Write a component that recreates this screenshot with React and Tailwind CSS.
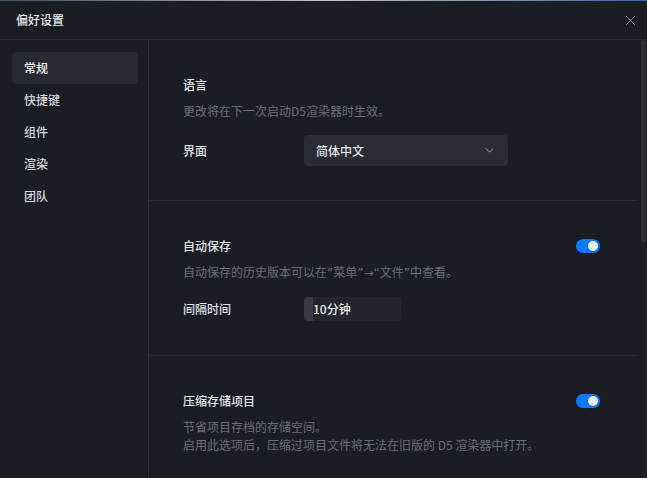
import React from "react";
import { ChevronDown, X } from "lucide-react";

const navItems = ["常规", "快捷键", "组件", "渲染", "团队"];

const Toggle = () => (
  <div className="w-6 h-[14px] rounded-full bg-[#0a7aff] flex items-center justify-end px-[2px]">
    <div className="w-[10px] h-[10px] rounded-full bg-[#e8efff]" />
  </div>
);

const Section = ({ title, toggle, children }) => (
  <div className="pl-[34px] pr-[37px] pt-9 pb-[34px] border-b border-[#2a2d35]">
    <div className="flex items-center justify-between h-[18px]">
      <span className="text-[12px] leading-[18px] font-medium text-[#e4e5e8]">{title}</span>
      {toggle && <Toggle />}
    </div>
    {children}
  </div>
);

// latin punctuation so the quotes stay narrow like the original
const Latin = ({ children }) => (
  <span className="leading-none" style={{ fontFamily: '"DejaVu Sans", sans-serif' }}>
    {children}
  </span>
);

export default function App() {
  return (
    <div
      className="w-[647px] h-[478px] bg-[#1b1d25] flex flex-col overflow-hidden"
      style={{ fontFamily: '"Noto Sans CJK SC", "Noto Sans", sans-serif' }}
    >
      <div className="h-px bg-gradient-to-r from-[#44506a] via-[#c9c2b4] to-[#3d66ad]" />
      <div className="h-[39px] flex items-center justify-between pl-4 pr-[8px] border-b border-[#2a2d35]">
        <span className="text-[12px] font-medium text-[#e4e5e8]">偏好设置</span>
        <X size={17} strokeWidth={1.1} className="text-[#9ea0a6]" />
      </div>

      <div className="flex flex-1 min-h-0">
        <div className="w-[149px] shrink-0 border-r border-[#2a2d35] pl-3 pr-[10px] pt-3">
          {navItems.map((item, i) => (
            <div
              key={item}
              className={
                "h-8 flex items-center pl-3 rounded text-[12px] font-medium " +
                (i === 0 ? "bg-[#272a32] text-[#eeeff1]" : "text-[#d6d7da]")
              }
            >
              {item}
            </div>
          ))}
        </div>

        <div className="flex-1 flex min-w-0">
          <div className="flex-1 mr-[4px] overflow-hidden">
            <Section title="语言">
              <p className="mt-2 text-[12px] leading-[18px] text-[#6c6f77]">
                更改将在下一次启动D5渲染器时生效。
              </p>
              <div className="mt-[15px] flex items-center">
                <span className="w-[121px] text-[12px] font-medium text-[#e0e1e4]">界面</span>
                <div className="w-[204px] h-[31px] rounded bg-[#2a2d35] flex items-center justify-between pl-3 pr-[12px]">
                  <span className="text-[12px] font-medium text-[#e4e5e8]">简体中文</span>
                  <ChevronDown size={13} strokeWidth={1.6} className="text-[#b4b6bb]" />
                </div>
              </div>
            </Section>

            <Section title="自动保存" toggle>
              <p className="mt-2 h-[18px] text-[12px] leading-[18px] text-[#6c6f77]">
                自动保存的历史版本可以在<Latin>“</Latin>菜单<Latin>”→“</Latin>文件<Latin>”</Latin>中查看。
              </p>
              <div className="mt-4 flex items-center">
                <span className="w-[121px] text-[12px] font-medium text-[#e0e1e4]">间隔时间</span>
                <div className="w-[97px] h-6 rounded-sm bg-[#23252d] flex items-center overflow-hidden">
                  <div className="w-[9px] h-full bg-[#383b43]" />
                  <span className="text-[12px] font-medium text-[#eeeff1]">10分钟</span>
                </div>
              </div>
            </Section>

            <Section title="压缩存储项目" toggle>
              <p className="mt-2 text-[12px] leading-[18px] text-[#6c6f77]">
                节省项目存档的存储空间。
                <br />
                启用此选项后，压缩过项目文件将无法在旧版的 D5 渲染器中打开。
              </p>
            </Section>
          </div>
          <div className="w-[6px] shrink-0 bg-[#1e2028]">
            <div className="w-[5px] h-[202px] bg-[#2d3038] rounded-sm" />
          </div>
        </div>
      </div>
    </div>
  );
}
